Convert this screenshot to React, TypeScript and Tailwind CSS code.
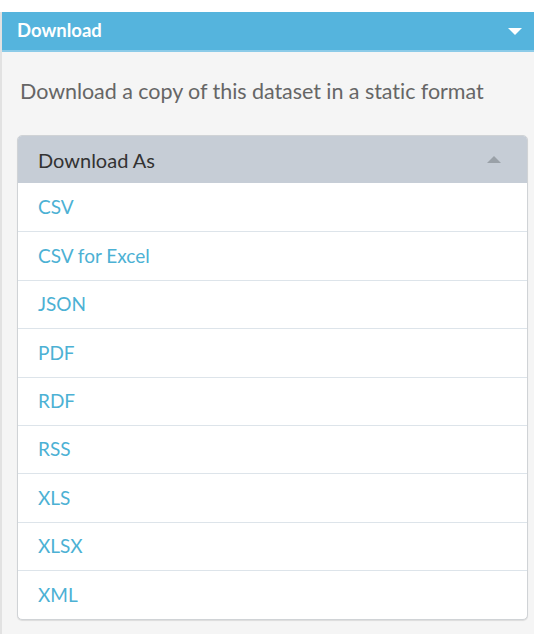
import React from "react";

const formats = ["CSV", "CSV for Excel", "JSON", "PDF", "RDF", "RSS", "XLS", "XLSX", "XML"];

export default function App() {
  return (
    <div className="h-[640px] w-[534px] bg-white pt-[12px] font-['Lato',sans-serif]">
      <div className="h-[622px] border-l-2 border-[#e2e2e2] bg-[#f5f5f5]">
        {/* header bar */}
        <div className="flex h-[40px] items-center justify-between border-b-2 border-[#8ccbe8] bg-[#55b4dd] pl-[15px] pr-[12px]">
          <span className="text-[18.5px] font-bold text-white">Download</span>
          <svg width="14" height="8" viewBox="0 0 14 8" className="mt-[2px]">
            <path d="M0 0h14L7 7z" fill="#fff" />
          </svg>
        </div>

        <p className="px-[18px] pt-[26px] text-[21.5px] leading-[26px] tracking-[-0.05px] text-[#666]">
          Download a copy of this dataset in a static format
        </p>

        <div className="ml-[15px] mr-[6px] mt-[31px] overflow-hidden rounded-[5px] border border-[#d0d3d6] bg-white shadow-[0_1px_1px_rgba(0,0,0,0.1)]">
          <div className="flex h-[47px] items-center justify-between bg-[#c6cdd6] pl-[20px] pr-[26px]">
            <span className="text-[20px] text-[#333]">Download As</span>
            <svg width="14" height="7" viewBox="0 0 14 7">
              <path d="M0 7h14L7 0z" fill="#9aa1a8" />
            </svg>
          </div>
          {formats.map((f, i) => (
            <div
              key={f}
              className={`flex h-[48.4px] items-center pl-[20px] text-[19px] text-[#4cb1d4] ${
                i > 0 ? "border-t border-[#dde4ea]" : ""
              }`}
            >
              {f}
            </div>
          ))}
        </div>
      </div>
    </div>
  );
}
